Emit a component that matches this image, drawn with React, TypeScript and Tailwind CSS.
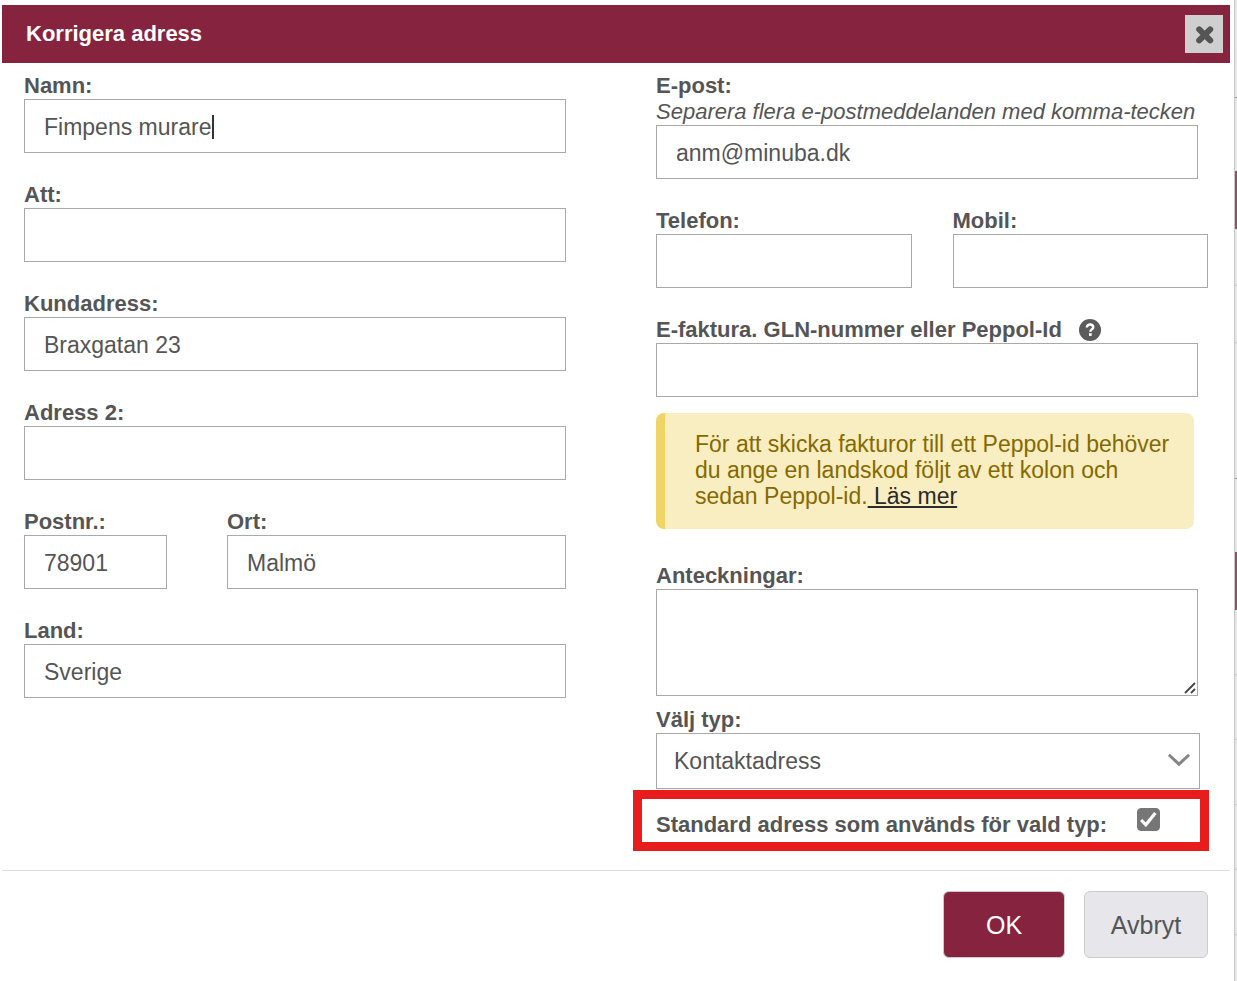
import { useState } from "react"
import type { ReactNode } from "react"

interface FieldProps {
  id: string
  label: ReactNode
  value?: string
  hint?: string
  className?: string
  inputClassName?: string
  caret?: boolean
}

interface BackdropRow {
  space: string
  fill: string
}

const inputStyle = "block h-[54px] w-full border border-[#a9a9a9] bg-white px-[19px] pt-[3px] outline-none"

// What is left visible of the page behind the dialog
const backdropRows: BackdropRow[] = [
  { space: "pt-[97px]", fill: "h-px bg-[#999999]" },
  { space: "pt-[73px]", fill: "h-[58px] bg-[#964d66]" },
  { space: "pt-14", fill: "h-px bg-[#c8c8c8]" },
  { space: "pt-14", fill: "h-px bg-[#c8c8c8]" },
  { space: "pt-[135px]", fill: "h-px bg-[#999999]" },
  { space: "pt-[73px]", fill: "h-[58px] bg-[#964d66]" },
  { space: "pt-16", fill: "h-px bg-[#c8c8c8]" },
  { space: "pt-16", fill: "h-px bg-[#c8c8c8]" },
  { space: "pt-16", fill: "h-px bg-[#c8c8c8]" },
  { space: "pt-16", fill: "h-px bg-[#c8c8c8]" },
  { space: "pt-16", fill: "h-px bg-[#c8c8c8]" },
]

function Field({ id, label, value = "", hint, className = "", inputClassName = "", caret }: FieldProps) {
  const [text, setText] = useState<string>(value)

  return (
    <div className={className}>
      <label htmlFor={id} className="flex items-center text-[22px] font-bold">
        {label}
      </label>
      {hint && <p className="text-[22px] whitespace-nowrap italic">{hint}</p>}
      <div className={`relative ${inputClassName}`}>
        <input
          id={id}
          type="text"
          value={text}
          onChange={(e) => setText(e.target.value)}
          className={inputStyle}
        />
        {caret && <span className="absolute top-4 left-[188px] h-6 w-0.5 bg-[#333333]" />}
      </div>
    </div>
  )
}

function HelpIcon() {
  return (
    <svg className="ml-4 h-6 w-6" viewBox="0 0 24 24" fill="none" aria-hidden="true">
      <circle cx="12" cy="12" r="11" fill="#5c5c5c" />
      <path
        d="M8.9 9.6c0-2.1 1.4-3.2 3.2-3.2s3.1 1.1 3.1 2.8c0 2.2-2.9 2.2-2.9 4.6"
        stroke="#ffffff"
        strokeWidth="2.5"
      />
      <rect x="11" y="15.2" width="2.7" height="2.7" fill="#ffffff" />
    </svg>
  )
}

export default function App() {
  const [isDefault, setIsDefault] = useState<boolean>(true)

  return (
    <div className="flex min-h-screen bg-white font-['Liberation_Sans',Arial,sans-serif] text-[23px] leading-[26px] text-[#555555]">
      <form className="mt-[5px] mr-1 ml-0.5 min-w-0 flex-1" onSubmit={(e) => e.preventDefault()}>
        {/* Header */}
        <header className="flex h-[58px] items-center justify-between bg-[#86233f] pr-[7px] pl-6">
          <h1 className="text-[22px] font-bold text-white">Korrigera adress</h1>
          <button
            type="button"
            aria-label="Stäng"
            className="flex h-[38px] w-[38px] items-center justify-center bg-[#cfcfcf]"
          >
            <svg className="h-5 w-5" viewBox="0 0 20 20" fill="none" aria-hidden="true">
              <path
                d="M5.2 5.4l11 11M16.2 5.4l-11 11"
                stroke="#555555"
                strokeWidth="6"
                strokeLinecap="round"
              />
            </svg>
          </button>
        </header>

        {/* Fields */}
        <div className="grid grid-cols-[542fr_552fr] gap-x-[90px] border-b border-[#dddddd] px-[22px] pt-[10px] pb-[19px]">
          <div className="flex flex-col gap-[29px]">
            <Field id="name" label="Namn:" value="Fimpens murare" caret />
            <Field id="att" label="Att:" />
            <Field id="address" label="Kundadress:" value="Braxgatan 23" />
            <Field id="address2" label="Adress 2:" />
            <div className="flex gap-[60px]">
              <Field id="zip" label="Postnr.:" value="78901" className="w-[143px]" />
              <Field id="city" label="Ort:" value="Malmö" className="flex-1" />
            </div>
            <Field id="country" label="Land:" value="Sverige" />
          </div>

          <div className="min-w-0">
            <div className="flex flex-col gap-[29px]">
              <Field
                id="email"
                label="E-post:"
                hint="Separera flera e-postmeddelanden med komma-tecken"
                value="anm@minuba.dk"
                inputClassName="mr-[10px]"
              />
              <div className="grid grid-cols-2 gap-x-[41px]">
                <Field id="phone" label="Telefon:" />
                <Field id="mobile" label="Mobil:" />
              </div>
              <Field
                id="peppol"
                label={
                  <>
                    E-faktura. GLN-nummer eller Peppol-Id
                    <HelpIcon />
                  </>
                }
                inputClassName="mr-[10px]"
              />
            </div>

            <div className="mt-4 mr-[14px] rounded-lg border-l-9 border-[#f0d466] bg-[#f9edc2] pt-[18px] pr-5 pb-5 pl-[30px] text-[#856a00]">
              För att skicka fakturor till ett Peppol-id behöver du ange en landskod följt av ett kolon och sedan
              Peppol-id.
              <a href="#peppol" className="text-[#2b2b2b] underline decoration-2 underline-offset-2">{" Läs mer"}</a>
            </div>

            <label htmlFor="notes" className="mt-[34px] block text-[22px] font-bold">
              Anteckningar:
            </label>
            <div className="relative mr-[10px]">
              <textarea
                id="notes"
                className="block h-[107px] w-full resize-none border border-[#a9a9a9] px-[19px] py-3 outline-none"
              />
              <svg className="absolute right-0.5 bottom-0.5 h-3 w-3" viewBox="0 0 12 12" fill="none" aria-hidden="true">
                <path d="M1 11L11 1M7 11l4-4" stroke="#444444" strokeWidth="1.8" />
              </svg>
            </div>

            <label htmlFor="type" className="mt-[11px] block text-[22px] font-bold">
              Välj typ:
            </label>
            <div className="relative mr-2">
              <select
                id="type"
                className="block h-14 w-full appearance-none border border-[#a9a9a9] bg-white px-[17px] outline-none"
              >
                <option>Kontaktadress</option>
              </select>
              <svg
                className="pointer-events-none absolute top-5 right-[10px] h-[14px] w-[22px]"
                viewBox="0 0 22 14"
                fill="none"
                aria-hidden="true"
              >
                <path d="M0.8 1.8L11 11.2 21.2 1.8" stroke="#858585" strokeWidth="3" />
              </svg>
            </div>

            {/* Highlighted default address row */}
            <div className="mt-px -mr-px -ml-[23px] flex h-[61px] items-center gap-[30px] border-9 border-[#e81c1c] pl-[14px]">
              <label htmlFor="default-address" className="mt-2 text-[22px] font-bold whitespace-nowrap">
                Standard adress som används för vald typ:
              </label>
              <span className="relative mb-0.5 h-[23px] w-[23px]">
                <input
                  id="default-address"
                  type="checkbox"
                  checked={isDefault}
                  onChange={() => setIsDefault(!isDefault)}
                  className="block h-full w-full appearance-none rounded border border-[#767676] checked:bg-[#767676]"
                />
                {isDefault && (
                  <svg
                    className="pointer-events-none absolute inset-0 h-[23px] w-[23px]"
                    viewBox="0 0 23 23"
                    fill="none"
                    aria-hidden="true"
                  >
                    <path d="M4.2 12l4.6 4.8L18.4 5" stroke="#ffffff" strokeWidth="3.2" />
                  </svg>
                )}
              </span>
            </div>
          </div>
        </div>

        {/* Buttons */}
        <footer className="flex justify-end gap-[19px] px-[22px] py-5 text-[25px]">
          <button type="submit" className="h-[67px] w-[122px] rounded-md border border-[#cccccc] bg-[#86233f] text-white">
            OK
          </button>
          <button type="button" className="h-[67px] w-[124px] rounded-md border border-[#cccccc] bg-[#e6e6eb]">
            Avbryt
          </button>
        </footer>
      </form>

      <div className="w-[3px] border-l border-[#c8c8c8] bg-[#e6e6e6]" aria-hidden="true">
        {backdropRows.map((row: BackdropRow, i: number) => (
          <div key={i} className={row.space}>
            <div className={row.fill} />
          </div>
        ))}
      </div>
    </div>
  )
}
